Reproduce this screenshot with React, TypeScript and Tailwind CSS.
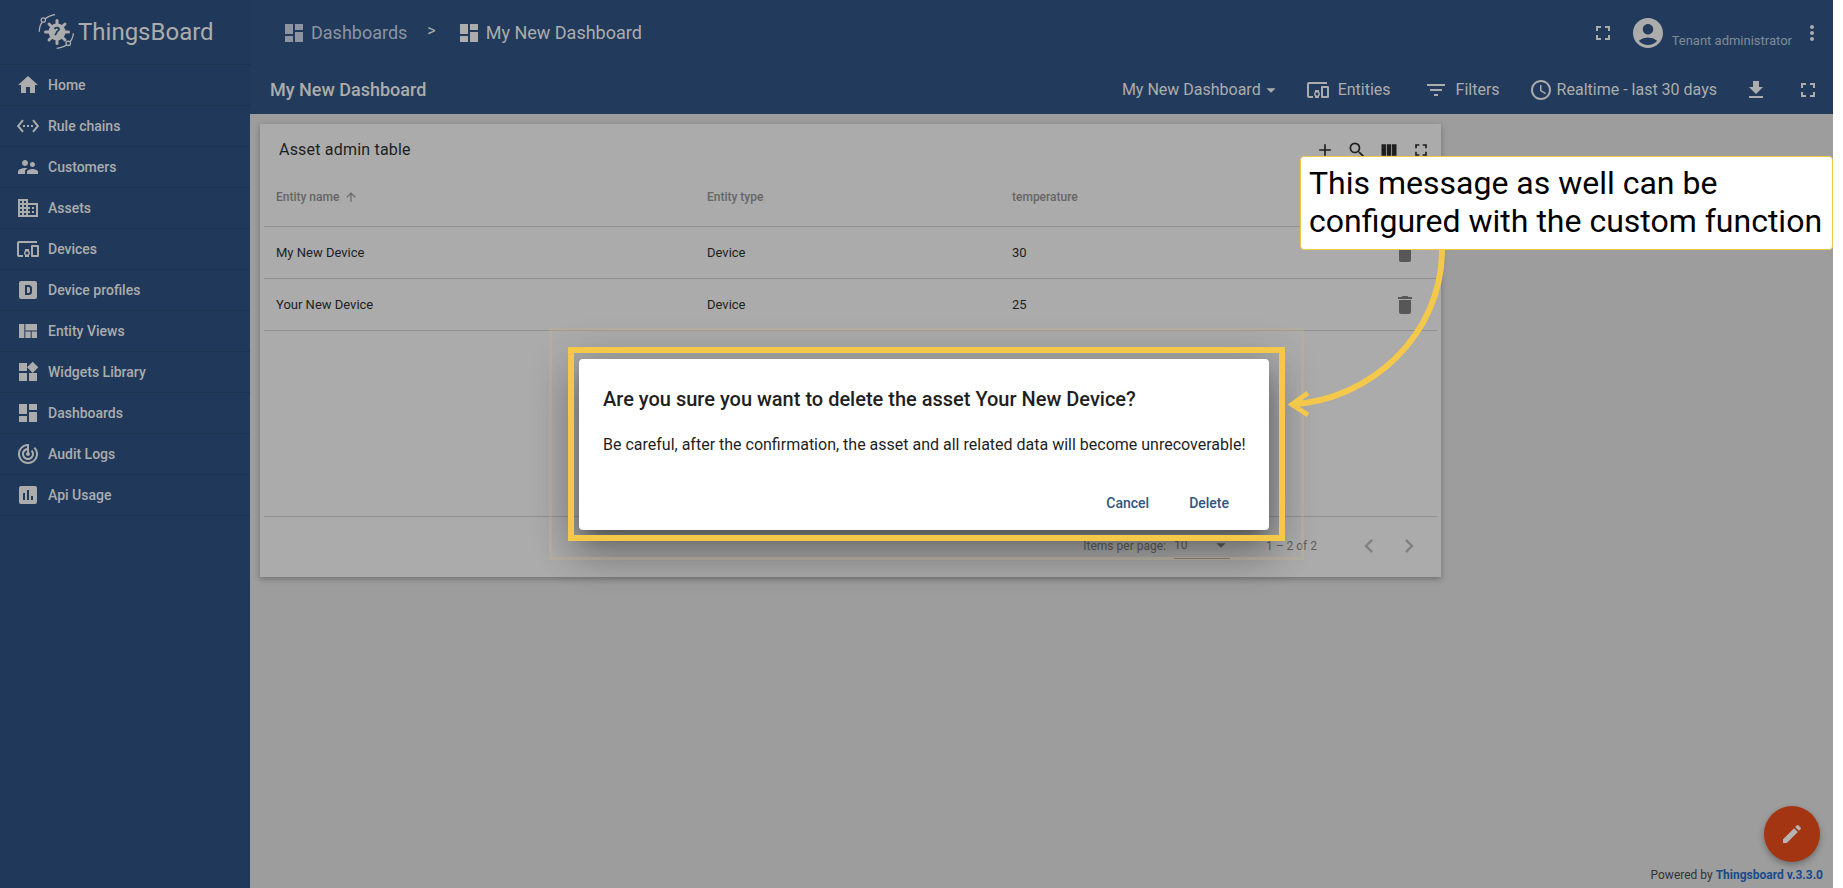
import type { IconType } from "react-icons"
import {
    MdAccessTime,
    MdAccountCircle,
    MdAdd,
    MdArrowDropDown,
    MdArrowUpward,
    MdChevronLeft,
    MdChevronRight,
    MdDashboard,
    MdDelete,
    MdDevicesOther,
    MdDomain,
    MdEdit,
    MdFileDownload,
    MdFilterList,
    MdFullscreen,
    MdHome,
    MdInsertChart,
    MdMoreVert,
    MdSearch,
    MdSettingsEthernet,
    MdSupervisorAccount,
    MdTrackChanges,
    MdViewColumn,
    MdViewQuilt,
    MdWidgets,
} from "react-icons/md"

function DeviceProfileIcon({ className }: { className?: string }) {
    return (
        <svg viewBox="0 0 24 24" className={className} fill="currentColor">
            <path
                fillRule="evenodd"
                d="M5 3h14a2 2 0 0 1 2 2v14a2 2 0 0 1-2 2H5a2 2 0 0 1-2-2V5a2 2 0 0 1 2-2Zm4 4v10h3.500a3.500 3.500 0 0 0 3.500-3.500v-3A3.500 3.500 0 0 0 12.500 7H9Zm2 2h1.500c.8 0 1.500.7 1.500 1.500v3c0 .8-.7 1.500-1.500 1.500H11V9Z"
            />
        </svg>
    )
}

function Logo() {
    return (
        <svg viewBox="0 0 36 36" className="h-[36px] w-[36px] text-[#acacac]" fill="none" stroke="currentColor">
            <circle cx="19" cy="18" r="8.500" fill="currentColor" stroke="none" />
            <g strokeWidth="3" strokeLinecap="round">
                <path d="M19 6.500v23M7.500 18h23M11 10l16 16M27 10 11 26" />
            </g>
            <path d="M16.500 15c1-2 5-1.500 4.500.5-.4 1.500-2.500 1.500-2.500 3.500l-1.500 2" stroke="#213b5c" strokeWidth="1.800" />
            <path d="M1.300 17.700C1 10 7 2 17 .5M35.300 19.300C35 27 29 33 18.700 34.300" strokeWidth="1.300" />
            <circle cx="5.300" cy="6" r="2.200" fill="#20395a" strokeWidth="1.300" />
            <circle cx="30.300" cy="29.300" r="2.200" fill="#20395a" strokeWidth="1.300" />
        </svg>
    )
}

const menu: { label: string; icon: IconType | typeof DeviceProfileIcon }[] = [
    { label: "Home", icon: MdHome },
    { label: "Rule chains", icon: MdSettingsEthernet },
    { label: "Customers", icon: MdSupervisorAccount },
    { label: "Assets", icon: MdDomain },
    { label: "Devices", icon: MdDevicesOther },
    { label: "Device profiles", icon: DeviceProfileIcon },
    { label: "Entity Views", icon: MdViewQuilt },
    { label: "Widgets Library", icon: MdWidgets },
    { label: "Dashboards", icon: MdDashboard },
    { label: "Audit Logs", icon: MdTrackChanges },
    { label: "Api Usage", icon: MdInsertChart },
]

const devices = [
    { name: "My New Device", temperature: "30" },
    { name: "Your New Device", temperature: "25" },
]

function Sidebar() {
    return (
        <aside className="flex h-full w-[250px] shrink-0 flex-col bg-[#20395a]">
            <div className="flex h-[65px] shrink-0 items-center border-b border-[#1c3350] pl-[38px]">
                <Logo />
                <span className="ml-[4px] text-[24px] leading-none text-[#acacac]">ThingsBoard</span>
            </div>
            {menu.map((item) => (
                <div
                    key={item.label}
                    className="flex h-[41px] shrink-0 items-center border-b border-[#1c3350] pl-[16px] text-[14px] font-medium text-[#acacac]"
                >
                    <item.icon className="h-[24px] w-[24px]" />
                    <span className="ml-[8px]">{item.label}</span>
                </div>
            ))}
        </aside>
    )
}

function Header() {
    return (
        <header className="h-[114px] shrink-0 bg-[#223b5c] text-[#acacac]">
            <div className="flex h-[65px] items-center">
                <div className="ml-[32px] flex items-center text-[#8b94a0]">
                    <MdDashboard className="h-[24px] w-[24px]" />
                    <span className="ml-[5px] text-[18px]">Dashboards</span>
                </div>
                <span className="ml-[20px] -translate-y-[2px] text-[16px]">&gt;</span>
                <MdDashboard className="ml-[21px] h-[24px] w-[24px]" />
                <span className="ml-[5px] text-[18px]">My New Dashboard</span>
                <MdFullscreen className="ml-auto h-[24px] w-[24px]" />
                <MdAccountCircle className="ml-[15px] h-[36px] w-[36px]" />
                <span className="ml-[6px] mt-[17px] text-[13px] text-[#7f8a99]">Tenant administrator</span>
                <MdMoreVert className="ml-[8px] mr-[9px] h-[24px] w-[24px]" />
            </div>
            <div className="flex h-[49px] items-center">
                <span className="ml-[20px] text-[18px] font-medium">My New Dashboard</span>
                <span className="ml-auto text-[16px]">My New Dashboard</span>
                <MdArrowDropDown className="-ml-[1px] h-[22px] w-[22px]" />
                <MdDevicesOther className="ml-[24px] h-[24px] w-[24px]" />
                <span className="ml-[8px] text-[16px]">Entities</span>
                <MdFilterList className="ml-[33px] h-[24px] w-[24px]" />
                <span className="ml-[8px] text-[16px]">Filters</span>
                <MdAccessTime className="ml-[29px] h-[24px] w-[24px]" />
                <span className="ml-[4px] text-[16px]">Realtime - last 30 days</span>
                <MdFileDownload className="ml-[27px] h-[24px] w-[24px]" />
                <MdFullscreen className="ml-[28px] mr-[13px] h-[24px] w-[24px]" />
            </div>
        </header>
    )
}

function AssetCard() {
    return (
        <section className="flex h-[453px] w-[1181px] flex-col bg-[#ababab] px-[4px] shadow-[0_2px_6px_rgba(0,0,0,0.3)]">
            <div className="flex h-[51px] shrink-0 items-center pl-[15px] pr-[6px] text-[#1e1e1e]">
                <span className="text-[16px] tracking-[0.2px]">Asset admin table</span>
                <div className="ml-auto flex items-center gap-[12px]">
                    <MdAdd className="h-[20px] w-[20px]" />
                    <MdSearch className="h-[20px] w-[20px]" />
                    <MdViewColumn className="h-[20px] w-[20px]" />
                    <MdFullscreen className="h-[20px] w-[20px]" />
                </div>
            </div>
            <div className="flex h-[52px] shrink-0 items-start border-b border-[#919191] pt-[13px] text-[12px] font-medium text-[#666666]">
                <span className="ml-[12px] flex w-[431px] items-center">
                    Entity name
                    <MdArrowUpward className="ml-[5px] h-[14px] w-[14px]" />
                </span>
                <span className="w-[305px]">Entity type</span>
                <span>temperature</span>
            </div>
            {devices.map((device) => (
                <div
                    key={device.name}
                    className="flex h-[52px] shrink-0 items-center border-b border-[#919191] text-[13px] text-[#1e1e1e]"
                >
                    <span className="ml-[12px] w-[431px]">{device.name}</span>
                    <span className="w-[305px]">Device</span>
                    <span>{device.temperature}</span>
                    <MdDelete className="ml-auto mr-[20px] h-[24px] w-[24px] text-[#575757]" />
                </div>
            ))}
            <div className="flex-1 border-b border-[#919191]" />
            <div className="flex h-[60px] shrink-0 items-center pb-[3px] text-[12px] text-[#5f5f5f]">
                <span className="ml-auto">Items per page:</span>
                <div className="ml-[8px] flex h-[26px] w-[56px] items-center justify-between border-b border-[#666666]">
                    10
                    <MdArrowDropDown className="-mr-[2px] h-[22px] w-[22px]" />
                </div>
                <span className="ml-[36px]">1 – 2 of 2</span>
                <MdChevronLeft className="ml-[38px] h-[28px] w-[28px] text-[#808080]" />
                <MdChevronRight className="ml-[12px] mr-[14px] h-[28px] w-[28px] text-[#808080]" />
            </div>
        </section>
    )
}

function ConfirmDialog() {
    return (
        <div className="absolute left-[549px] top-[328px] pb-[30px] pl-[30px] pr-[35px] pt-[31px]">
            <div className="flex h-[171px] w-[690px] flex-col rounded-[4px] bg-white px-[24px] text-[#1f1f1f] shadow-[0_11px_15px_-7px_rgba(0,0,0,0.3),0_24px_38px_3px_rgba(0,0,0,0.22),0_9px_46px_8px_rgba(0,0,0,0.2)]">
                <h2 className="mt-[26px] whitespace-nowrap text-[20px] font-medium leading-[28px]">
                    Are you sure you want to delete the asset Your New Device?
                </h2>
                <p className="mt-[22px] whitespace-nowrap text-[16px] leading-[20px]">
                    Be careful, after the confirmation, the asset and all related data will become unrecoverable!
                </p>
                <div className="ml-auto mt-[38px] flex gap-[40px] pr-[16px] text-[14px] font-medium leading-[20px] text-[#305680]">
                    <span>Cancel</span>
                    <span>Delete</span>
                </div>
            </div>
            {/* highlight frames sit above the dialog shadow */}
            <div className="absolute inset-0 border-[3px] border-[#c4b98a]/30" />
            <div className="absolute inset-[19px] border-[6px] border-[#f4c84a]" />
        </div>
    )
}

function Callout() {
    return (
        <>
            <svg className="absolute left-[1285px] top-[245px] h-[180px] w-[180px]" viewBox="0 0 180 180" fill="none">
                <path d="M157 5C157 90 85 155 8 159" stroke="#f4c84a" strokeWidth="6" />
                <path d="M23 148 7 159.500 23 170" stroke="#f4c84a" strokeWidth="5" />
            </svg>
            <div className="absolute left-[1300px] top-[156px] h-[94px] w-[533px] rounded-[4px] border border-[#f4c84a] bg-white pl-[8px] pt-[7px] text-[32px] leading-[38px] text-black">
                This message as well can be
                <br />
                configured with the custom function
            </div>
        </>
    )
}

export default function App() {
    return (
        <div className="relative flex h-[888px] w-[1833px] overflow-hidden bg-[#9d9d9d] font-['Roboto',sans-serif]">
            <Sidebar />
            <main className="flex min-w-0 flex-1 flex-col">
                <Header />
                <div className="flex-1 pl-[10px] pt-[10px]">
                    <AssetCard />
                </div>
                <footer className="pb-[6px] pr-[10px] text-right text-[12px] leading-[14px] text-[#333333]">
                    Powered by <span className="font-bold text-[#184b8a]">Thingsboard v.3.3.0</span>
                </footer>
            </main>
            <ConfirmDialog />
            <Callout />
            <button className="absolute left-[1764px] top-[806px] flex h-[56px] w-[56px] items-center justify-center rounded-full bg-[#a33512] text-[#b5b5b5] shadow-[0_3px_6px_rgba(0,0,0,0.3)]">
                <MdEdit className="h-[24px] w-[24px]" />
            </button>
        </div>
    )
}
